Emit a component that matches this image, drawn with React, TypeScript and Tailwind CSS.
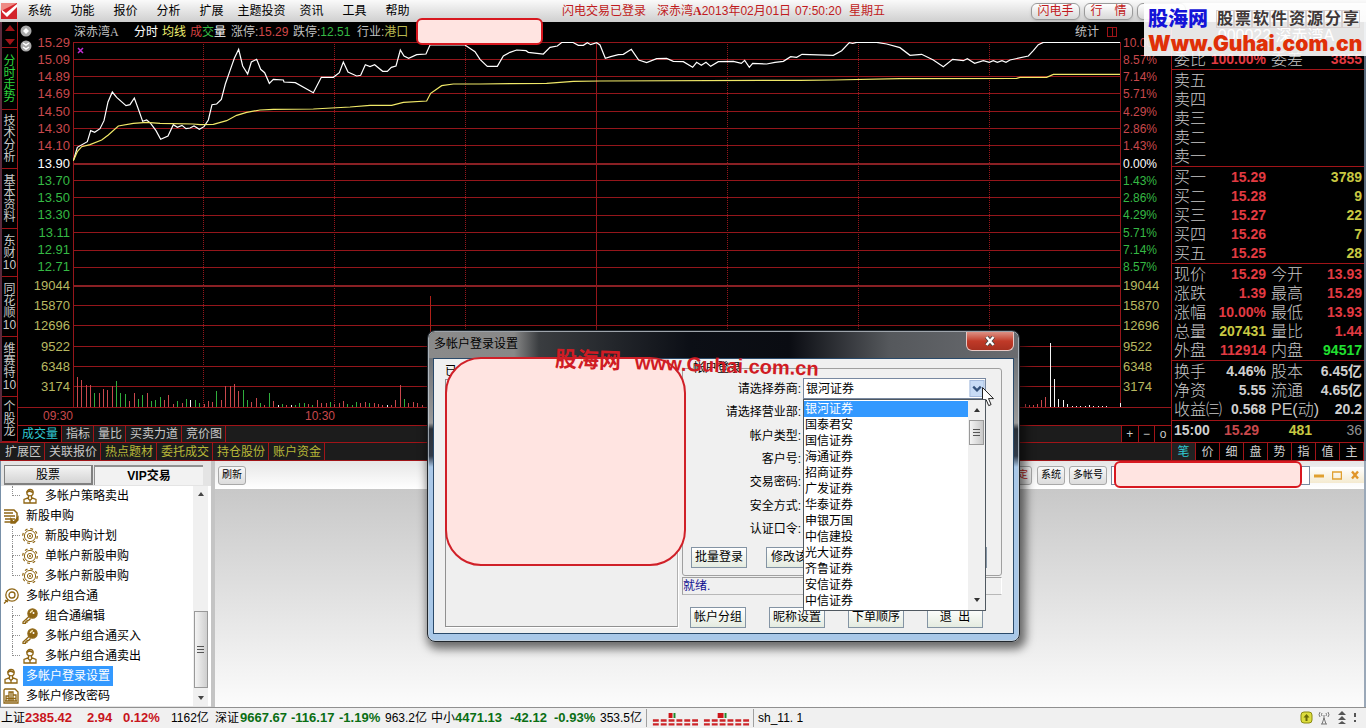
import type { ReactNode } from "react";

const MENU = ["系统", "功能", "报价", "分析", "扩展", "主题投资", "资讯", "工具", "帮助"];

const PRICES = ["15.29", "15.09", "14.89", "14.69", "14.50", "14.30", "14.10", "13.90", "13.70", "13.50", "13.30", "13.11", "12.91", "12.71"];
const PERCENTS = ["10.00%", "8.57%", "7.14%", "5.71%", "4.29%", "2.86%", "1.43%", "0.00%", "1.43%", "2.86%", "4.29%", "5.71%", "7.14%", "8.57%"];
const VOLUMES = ["19044", "15870", "12696", "9522", "6348", "3174"];

const GRID_Y = [42, 59, 76, 93, 111, 128, 145, 180, 197, 215, 232, 250, 267, 305, 325, 346, 366, 386, 407];

const PRICE_LINE =
  "220,482 232,442 262,425 272,392 284,397 300,386 312,362 324,306 337,276 350,292 378,317 390,314 403,294 416,330 428,364 440,360 452,370 468,392 482,418 504,408 520,374 532,382 546,376 558,386 570,384 582,378 598,388 612,380 625,360 636,314 650,312 664,298 676,252 690,212 703,175 716,148 728,198 743,222 754,186 770,178 782,208 794,218 808,250 820,238 850,240 852,246 886,248 940,278 964,232 1000,232 1018,218 1030,186 1044,216 1070,228 1082,226 1096,194 1110,200 1124,194 1148,214 1162,214 1174,202 1188,198 1201,150 1212,168 1226,175 1250,164 1278,162 1290,135 1395,135 1425,155 1440,178 1462,199 1492,199 1510,168 1530,157 1550,150 1578,152 1585,157 1630,162 1650,142 1672,138 1686,127 1718,127 1735,136 1750,136 1762,128 1772,134 1790,128 1800,135 1816,175 1832,170 1855,164 1870,163 1894,148 1916,180 1940,188 1970,176 2000,175 2020,184 2050,185 2078,202 2090,187 2104,196 2118,187 2132,199 2155,185 2200,184 2224,190 2234,181 2248,202 2258,190 2300,192 2325,187 2350,184 2372,170 2390,172 2406,163 2500,166 2525,152 2548,128 2558,130 2570,127 2630,127 2660,132 2700,143 2730,166 2765,163 2800,180 2830,200 2858,178 2890,182 2902,176 2924,190 2950,182 2968,187 2980,182 2992,187 3006,182 3018,187 3030,180 3085,168 3100,152 3115,134 3130,127 3360,127";
const AVERAGE_LINE =
  "220,482 232,455 245,440 270,434 305,420 325,405 355,378 400,370 440,367 480,370 580,372 600,374 640,373 680,362 710,346 740,337 780,330 820,328 940,327 1050,321 1110,316 1175,316 1210,307 1280,303 1292,280 1325,257 1360,252 1440,252 1640,250 1720,244 1800,243 2400,241 2500,240 2700,236 3050,235 3060,232 3140,232 3160,223 3360,223";

const RED = "#c8484c";
const GREEN = "#2fae3c";
const WHITE = "#f4f4f4";

// [x, height, colour]
const BARS: [number, number, string][] = [
  [77, 30, RED], [81, 27, RED], [86, 22, RED], [90, 22, RED], [94, 14, GREEN], [99, 14, RED], [103, 18, RED], [107, 17, RED],
  [112, 21, RED], [116, 26, GREEN], [120, 14, GREEN], [125, 13, GREEN], [129, 6, RED], [134, 14, RED], [138, 8, GREEN], [142, 12, GREEN],
  [147, 14, RED], [151, 6, GREEN], [155, 7, GREEN], [160, 10, GREEN], [164, 7, RED], [168, 12, RED], [173, 3, RED], [177, 6, GREEN],
  [182, 4, RED], [186, 8, GREEN], [190, 7, WHITE], [195, 7, GREEN], [199, 4, GREEN], [204, 3, RED], [208, 6, RED], [212, 5, RED],
  [216, 16, GREEN], [221, 7, RED], [225, 21, RED], [230, 21, RED], [234, 23, RED], [238, 16, RED], [243, 17, GREEN], [247, 7, GREEN],
  [251, 5, RED], [256, 9, RED], [260, 4, GREEN], [264, 2, RED], [269, 14, GREEN], [273, 6, RED], [278, 2, WHITE], [282, 3, GREEN],
  [286, 2, RED], [291, 2, WHITE], [295, 2, GREEN], [299, 4, GREEN], [304, 4, GREEN], [308, 3, RED], [312, 2, GREEN], [317, 7, RED],
  [321, 4, RED], [326, 4, RED], [330, 5, GREEN], [334, 3, RED], [339, 4, RED], [343, 6, RED], [347, 3, GREEN], [352, 2, GREEN],
  [356, 5, GREEN], [360, 4, RED], [365, 5, RED], [369, 4, GREEN], [374, 4, RED], [378, 3, RED], [382, 2, RED], [387, 2, WHITE],
  [391, 2, RED], [395, 7, RED], [400, 22, RED], [404, 8, GREEN], [408, 4, RED], [413, 5, RED], [417, 4, RED], [422, 2, RED],
  [430, 111, "#b02018"], [1025, 3, RED], [1029, 2, RED], [1033, 2, RED], [1037, 3, RED], [1041, 7, RED], [1045, 10, RED],
  [1050, 64, WHITE], [1054, 28, WHITE], [1058, 8, WHITE], [1063, 7, WHITE], [1067, 3, WHITE], [1072, 1, WHITE], [1076, 1, WHITE],
  [1080, 1, WHITE], [1085, 1, WHITE], [1089, 2, WHITE], [1093, 1, WHITE], [1098, 1, WHITE], [1102, 1, WHITE], [1106, 1, WHITE],
  [1120, 4, WHITE],
];

const SIDE_TABS = [
  { label: "分时走势", box: "h-[62px] text-[#2fd43c]" },
  { label: "技术分析", box: "h-[59px]" },
  { label: "基本资料", box: "h-[60px]" },
  { label: "东财10", box: "h-[48px]" },
  { label: "同花顺10", box: "h-[60px]" },
  { label: "维赛特10", box: "h-[60px]" },
  { label: "个股龙", box: "h-[45px]" },
];

const BROKERS = ["银河证券", "国泰君安", "国信证券", "海通证券", "招商证券", "广发证券", "华泰证券", "申银万国", "中信建投", "光大证券", "齐鲁证券", "安信证券", "中信证券"];

type IconName = "person" | "doc" | "gear" | "search" | "key" | "building";

const TREE: { label: string; icon: IconName; child?: boolean; last?: boolean; active?: boolean }[] = [
  { label: "多帐户策略卖出", icon: "person", child: true, last: true },
  { label: "新股申购", icon: "doc" },
  { label: "新股申购计划", icon: "gear", child: true },
  { label: "单帐户新股申购", icon: "gear", child: true },
  { label: "多帐户新股申购", icon: "gear", child: true, last: true },
  { label: "多帐户组合通", icon: "search" },
  { label: "组合通编辑", icon: "key", child: true },
  { label: "多帐户组合通买入", icon: "key", child: true },
  { label: "多帐户组合通卖出", icon: "person", child: true, last: true },
  { label: "多帐户登录设置", icon: "person", active: true },
  { label: "多帐户修改密码", icon: "building" },
];

function TreeIcon({ name }: { name: IconName }) {
  return (
    <svg viewBox="0 0 16 16" className="size-4 shrink-0" fill="none" stroke="#8f6614" strokeWidth="1.3">
      {name === "person" && (
        <>
          <circle cx="8" cy="4.6" r="3.2" />
          <path d="M6.5 7.5v2.2L2 11.5V15h12v-3.5L9.500 9.700V7.500M6 10.500l2 2 2-2M8 12.500V15" />
          <path d="M5 4.500q1.500-3 6 0" strokeWidth="1.800" />
        </>
      )}
      {name === "doc" && (
        <>
          <path d="M1 2h10l3 3v6M1 5h9M1 8h11M2 11h10M1.500 14h11" strokeWidth="1.500" />
          <path d="M8 11l2.500 3.500L15 9v3l-3 3H8z" fill="#8f6614" />
        </>
      )}
      {name === "gear" && (
        <>
          <circle cx="8" cy="8" r="7.300" strokeDasharray="2.870 2.870" strokeWidth="1.200" />
          <circle cx="8" cy="8" r="5.600" strokeWidth="1" />
          <circle cx="8" cy="8" r="2.600" strokeWidth="1" />
          <circle cx="8" cy="8" r="0.600" fill="#8f6614" strokeWidth="1" />
        </>
      )}
      {name === "search" && (
        <>
          <circle cx="9" cy="7" r="6.200" />
          <circle cx="9" cy="7" r="3" />
          <path d="M5 11.500L1 15.500M2 12l3 2" />
        </>
      )}
      {name === "key" && (
        <>
          <path d="M7 8.500L1 14v1.500h2.500V14H5v-1.500h1.500l2-2" />
          <circle cx="10.500" cy="5.500" r="4.600" fill="#8f6614" />
          <path d="M8.200 5q.600-2.200 2.800-2.500" stroke="#f6e7b0" />
          <circle cx="11.500" cy="5" r="1" fill="#fff" stroke="none" />
        </>
      )}
      {name === "building" && (
        <>
          <path d="M2 1h10l3 3v11H1V2z" />
          <path d="M3 13V8h3V4h4v9M3 10.500h10M10 7h3v6M2 13h12M6 8v5M8 4v9" />
        </>
      )}
    </svg>
  );
}

function MenuBar() {
  return (
    <header className="flex h-[22px] items-center bg-linear-to-b from-[#fafafa] to-[#cfcfcf] text-xs leading-4">
      <svg viewBox="0 0 16 16" className="mx-px size-4">
        <path d="M0 0h16v16H0z" fill="#d3252b" />
        <path d="M0 0h16L0 8z" fill="#ee8a84" />
        <path d="M1 7l4 3L16 1v3L6 14 1 9z" fill="#fff" />
      </svg>
      <nav className="flex">
        {MENU.map((m) => (
          <button key={m} type="button" className={m.length > 2 ? "w-[57px]" : "w-[43px]"}>
            {m}
          </button>
        ))}
      </nav>
      <div className="ml-[143px] flex whitespace-pre text-[#c01a20]">
        <span className="w-[95px]">闪电交易已登录</span>
        <span className="w-[138px]">深赤湾<b className="font-['Liberation_Serif']">A</b>2013年02月01日</span>
        <span className="w-[54px]">07:50:20</span>
        <span>星期五</span>
      </div>
      <div className="ml-auto flex w-[335px] gap-1">
        {["闪电手", "行　情", ""].map((b) => (
          <button
            key={b}
            type="button"
            aria-label={b || "更多"}
            className="h-[17px] w-[49px] rounded-md border border-[#9a9a9a] bg-linear-to-b from-white to-[#d8d8d8] leading-[15px] text-[#c01a20] shadow"
          >
            {b}
          </button>
        ))}
      </div>
    </header>
  );
}

function SideTabs() {
  return (
    <nav className="flex w-[18px] shrink-0 flex-col border-r border-l-2 border-r-[#a01418] border-l-[#5a2a3c] text-xs leading-3 text-[#c8c8c8]">
      <div className="flex h-[26px] items-center justify-center border-b border-[#a01418]">
        <svg viewBox="0 0 10 20" className="h-5 w-[10px]" fill="#a01418">
          <path d="M5 0l5 6H0zM5 20l5-6H0z" />
        </svg>
      </div>
      {SIDE_TABS.map((t) => (
        <button key={t.label} type="button" className={`flex flex-col items-center justify-center border-b border-[#a01418] ${t.box}`}>
          {(t.label.match(/\d+|\D/g) ?? []).map((ch) => (
            <span key={ch}>{ch}</span>
          ))}
        </button>
      ))}
    </nav>
  );
}

function axisColor(i: number, up: string) {
  if (i === 7) return "text-white";
  return i < 7 ? up : "text-[#35b944]";
}

function Axis({ values, align }: { values: string[]; align: string }) {
  return (
    <div className={`flex flex-1 flex-col pt-3 ${align}`}>
      <div className="grid h-[242px] auto-rows-fr items-center">
        {values.map((v, i) => (
          <div key={i} className={axisColor(i, "text-[#c8484c]")}>{v}</div>
        ))}
      </div>
      <div className="grid h-[121px] auto-rows-fr items-center text-[13px] text-[#b8b860]">
        {VOLUMES.map((v) => (
          <div key={v}>{v}</div>
        ))}
      </div>
    </div>
  );
}

function Plot() {
  return (
    <svg viewBox="73 42 1048 366" preserveAspectRatio="none" className="block h-[366px] w-full">
      <g stroke="#94161b" strokeWidth="1" shapeRendering="crispEdges">
        {GRID_Y.map((y) => (
          <path key={y} d={`M73 ${y}.5H1121`} />
        ))}
        <path d="M73 164H1121M73 286H1121" strokeWidth="2" stroke="#8a2024" />
        <path d="M73.500 42V408M596.500 42V408M1120.500 42V408" />
        <path d="M203.500 42V408M334.500 42V408M465.500 42V408M727.500 42V408M858.500 42V408M989.500 42V408" strokeDasharray="1 1" />
      </g>
      <g shapeRendering="crispEdges">
        {BARS.map(([x, h, color]) => (
          <rect key={x} x={x} y={407 - h} width="1" height={h} fill={color} />
        ))}
      </g>
      <g transform="scale(0.33333)" fill="none" strokeWidth="1.200">
        <polyline points={PRICE_LINE} stroke="#fff" vectorEffect="non-scaling-stroke" />
        <polyline points={AVERAGE_LINE} stroke="#f0e868" vectorEffect="non-scaling-stroke" />
      </g>
      <path d="M78 48l5 5M83 48l-5 5" stroke="#c030d0" strokeWidth="1.500" />
    </svg>
  );
}

function ChartArea() {
  return (
    <div className="flex h-[403px] text-xs leading-4">
      <div className="flex w-[55px] shrink-0 flex-col">
        <div className="flex h-[386px] border-b border-[#94161b]">
          <svg viewBox="0 0 12 32" className="mt-[2px] ml-[2px] h-8 w-3 shrink-0">
            <circle cx="6" cy="7" r="5.500" fill="#aaa" />
            <circle cx="6" cy="22" r="5.500" fill="#aaa" />
            <path d="M6 4l3 3-3 3-3-3z" fill="#fff" />
            <path d="M3 19l3 2 3-2M3 23l3 2 3-2" fill="none" stroke="#fff" strokeWidth="1.500" />
          </svg>
          <Axis values={PRICES} align="pr-[3px] text-right text-[13px]" />
        </div>
        <div className="text-right text-[#c8484c]">09:30</div>
      </div>
      <div className="min-w-0 flex-1">
        <div className="flex h-5 items-center whitespace-nowrap text-[#c0c0c0]">
          <span className="w-[61px] pl-px">深赤湾<span className="font-['Liberation_Serif']">A</span></span>
          <span className="w-7 text-white">分时</span>
          <span className="w-7 text-[#f0f070]">均线</span>
          <span className="w-[41px] text-white">
            <span className="text-[#d04040]">成</span>
            <span className="text-[#35b944]">交</span>量
          </span>
          <span className="w-[62px]">涨停:<span className="text-[#d04848]">15.29</span></span>
          <span className="w-16">跌停:<span className="text-[#35b944]">12.51</span></span>
          <span>行业:<span className="text-[#b8b850]">港口</span></span>
          <span className="ml-auto pr-2">统计</span>
          <span className="mr-1 flex h-[10px] w-[10px] border border-[#a01418]">
            <span className="ml-auto w-1 border-l border-[#a01418]" />
          </span>
        </div>
        <Plot />
        <div className="grid grid-cols-4 text-right text-[#c8484c]">
          <span>10:30</span>
        </div>
      </div>
      <div className="flex w-[50px] shrink-0 flex-col">
        <div className="flex h-[386px] border-b border-[#94161b]">
          <Axis values={PERCENTS} align="pl-[2px]" />
        </div>
      </div>
    </div>
  );
}

function TabButton({ children, color = "text-[#c8c8c8]" }: { children: ReactNode; color?: string }) {
  return (
    <button type="button" className={`h-full border-r border-[#a01418] pr-[3px] pl-1 text-xs ${color}`}>
      {children}
    </button>
  );
}

function PanelRow({ a, b, c, d, bc, dc }: { a: string; b?: string; c?: string; d?: string; bc?: string; dc?: string }) {
  return (
    <div className="flex h-[19px] items-center text-sm leading-[19px] font-bold whitespace-nowrap">
      <span className="w-[50px] text-base leading-[19px] font-light text-[#c8c8c8]">{a}</span>
      <span className={`flex w-[42px] justify-end ${bc ?? ""}`}>{b}</span>
      <span className="ml-[5px] text-base leading-[19px] font-light text-[#c8c8c8]">{c}</span>
      <span className={`ml-auto ${dc ?? ""}`}>{d}</span>
    </div>
  );
}

function QuotePanel() {
  const red = "text-[#e23a42]";
  const yellow = "text-[#c8c842]";
  const grey = "text-[#d0d0d0]";
  const group = "border-b border-[#a01418] pr-[2px] pl-[2px]";
  return (
    <aside className="flex w-[195px] shrink-0 flex-col border-r-2 border-l border-r-[#5a6a7c] border-l-[#a01418] bg-black">
      <div className={group}>
        <h1 className="pl-4 text-center text-base leading-[28px] text-white">000022 深赤湾A</h1>
        <PanelRow a="委比" b="100.00%" bc={red} c="委差" d="3855" dc={red} />
      </div>
      <div className={`pt-px ${group}`}>
        {["卖五", "卖四", "卖三", "卖二", "卖一"].map((s) => (
          <PanelRow key={s} a={s} />
        ))}
      </div>
      <div className={`pt-px ${group}`}>
        <PanelRow a="买一" b="15.29" bc={red} d="3789" dc={yellow} />
        <PanelRow a="买二" b="15.28" bc={red} d="9" dc={yellow} />
        <PanelRow a="买三" b="15.27" bc={red} d="22" dc={yellow} />
        <PanelRow a="买四" b="15.26" bc={red} d="7" dc={yellow} />
        <PanelRow a="买五" b="15.25" bc={red} d="28" dc={yellow} />
      </div>
      <div className={`pt-px ${group}`}>
        <PanelRow a="现价" b="15.29" bc={red} c="今开" d="13.93" dc={red} />
        <PanelRow a="涨跌" b="1.39" bc={red} c="最高" d="15.29" dc={red} />
        <PanelRow a="涨幅" b="10.00%" bc={red} c="最低" d="13.93" dc={red} />
        <PanelRow a="总量" b="207431" bc={yellow} c="量比" d="1.44" dc={red} />
        <PanelRow a="外盘" b="112914" bc={red} c="内盘" d="94517" dc="text-[#20e030]" />
      </div>
      <div className={`py-px ${group}`}>
        <PanelRow a="换手" b="4.46%" bc={grey} c="股本" d="6.45亿" dc={grey} />
        <PanelRow a="净资" b="5.55" bc={grey} c="流通" d="4.65亿" dc={grey} />
        <PanelRow a="收益㈢" b="0.568" bc={grey} c="PE(动)" d="20.2" dc={grey} />
      </div>
      <div className={`h-[22px] text-sm leading-[19px] font-bold ${group} ${grey}`}>
        <div className="flex">
          <span className="w-[50px]">15:00</span>
          <span className="w-[38px] text-[#c8484c]">15.29</span>
          <span className="w-[50px] text-right text-[#c8c842]">481</span>
          <span className="ml-auto font-normal text-[#909090]">36</span>
        </div>
      </div>
      <div className="grid flex-1 grid-cols-8 border-b border-[#a01418]">
        {["笔", "价", "细", "盘", "势", "指", "值", "主"].map((t, i) => (
          <button key={t} type="button" className={`border-r border-[#a01418] text-xs ${i === 0 ? "bg-[#222] text-[#30c8d0]" : grey}`}>
            {t}
          </button>
        ))}
      </div>
    </aside>
  );
}

function TreePanel() {
  return (
    <div className="flex w-[211px] shrink-0 flex-col border-l border-[#7890a8] bg-[#e4e4e4] text-xs">
      <div className="flex h-[25px] gap-px pt-1 pl-[3px]">
        <button type="button" className="h-5 w-[89px] border border-r-2 border-b-2 border-[#808080] bg-linear-to-b from-[#f4f4f4] to-[#d4d4d4]">
          股票
        </button>
        <button type="button" className="h-5 w-[109px] border-t-2 border-l border-[#909090] bg-[#f2f2f2] font-bold">
          VIP交易
        </button>
      </div>
      <div className="flex h-[220px] bg-white">
        <ul className="flex-1">
          {TREE.map((n) => (
            <li key={n.label} className="flex h-5 items-center pl-[2px]">
              {n.child && (
                <span className="mr-[2px] ml-[9px] flex h-5 w-2 flex-col">
                  <span className="h-[10px] border-b border-l border-dotted border-[#909090]" />
                  {!n.last && <span className="h-[10px] border-l border-dotted border-[#909090]" />}
                </span>
              )}
              <TreeIcon name={n.icon} />
              <span className={n.active ? "ml-1 bg-[#3399ff] px-[3px] leading-5 text-white" : "ml-1 px-[3px] leading-5"}>{n.label}</span>
            </li>
          ))}
        </ul>
        <div className="mr-[3px] flex w-[15px] flex-col items-center justify-between bg-[#f0f0f0] py-[6px]">
          <svg viewBox="0 0 6 4" className="h-1 w-[6px]"><path d="M3 0l3 4H0z" fill="#444" /></svg>
          <div className="mt-auto mb-2 flex h-[77px] w-[14px] flex-col items-center justify-center gap-[2px] border border-[#999] bg-linear-to-r from-[#f4f4f4] to-[#cfcfcf]">
            <span className="h-px w-[7px] bg-[#555]" />
            <span className="h-px w-[7px] bg-[#555]" />
            <span className="h-px w-[7px] bg-[#555]" />
          </div>
          <svg viewBox="0 0 6 4" className="h-1 w-[6px]"><path d="M0 0h6L3 4z" fill="#444" /></svg>
        </div>
      </div>
    </div>
  );
}

function ToolButton({ children, className = "" }: { children: ReactNode; className?: string }) {
  return (
    <button type="button" className={`h-[19px] rounded-[3px] border border-[#a8a8a8] bg-linear-to-b from-[#f8f8f8] to-[#dcdcdc] px-[3px] text-[10px] leading-4 ${className}`}>
      {children}
    </button>
  );
}

function TradeArea() {
  return (
    <div className="flex min-w-0 flex-1 flex-col border-r-2 border-l-4 border-r-[#9aa8b8] border-l-[#c4c4c4]">
      <div className="flex h-7 items-center gap-1 bg-linear-to-b from-[#e6e6e6] to-white pl-[3px]">
        <ToolButton>刷新</ToolButton>
        <ToolButton className="mr-px ml-auto text-[#c01a20]">锁定</ToolButton>
        <ToolButton>系统</ToolButton>
        <ToolButton>多帐号</ToolButton>
        <select aria-label="资金帐号" className="h-[19px] w-[199px] appearance-none border border-[#7a8aa0] bg-white" />
        <div className="-ml-1 flex w-[54px] items-center justify-around bg-linear-to-b from-white to-[#f4ead0] py-[3px]">
          <button type="button" aria-label="最小化"><svg viewBox="0 0 10 10" className="size-[10px]"><path d="M0 6h10" stroke="#e0a030" strokeWidth="3" /></svg></button>
          <button type="button" aria-label="最大化"><svg viewBox="0 0 10 10" className="size-[10px]"><path d="M0.500 2h9v7h-9z" fill="none" stroke="#e0a030" strokeWidth="1.500" /></svg></button>
          <button type="button" aria-label="关闭"><svg viewBox="0 0 10 10" className="size-[10px]"><path d="M2 1.500l6 7M8 1.500l-6 7" stroke="#e0952a" strokeWidth="2.400" /></svg></button>
        </div>
      </div>
      <div className="flex-1 bg-linear-to-b from-[#c8c8c8] to-[#fcfcfc]" />
    </div>
  );
}

function StatusBar() {
  const up = "text-[13px] font-bold text-[#c8141c]";
  const down = "text-[13px] font-bold text-[#0a6e14]";
  return (
    <footer className="flex h-[21px] items-center border-t border-[#909090] bg-[#f0f0f0] pl-px text-xs leading-4 whitespace-nowrap">
      <span className="w-6">上证</span>
      <span className={`w-[62px] ${up}`}>2385.42</span>
      <span className={`w-9 ${up}`}>2.94</span>
      <span className={`w-12 ${up}`}>0.12%</span>
      <span className="w-11">1162亿</span>
      <span className="w-[25px]">深证</span>
      <span className={`w-[51px] ${down}`}>9667.67</span>
      <span className={`w-12 ${down}`}>-116.17</span>
      <span className={`w-[46px] ${down}`}>-1.19%</span>
      <span className="w-[46px]">963.2亿</span>
      <span className="w-6">中小</span>
      <span className={`w-[55px] ${down}`}>4471.13</span>
      <span className={`w-11 ${down}`}>-42.12</span>
      <span className={`w-[46px] ${down}`}>-0.93%</span>
      <span className="w-[46px]">353.5亿</span>
      <svg viewBox="0 0 108 18" className="h-[18px] w-[108px] border-x border-[#a0a0a0]">
        <path d="M6 11.500h46M58 11.500h46M6 15.500h46M58 15.500h46" stroke="#cc2428" strokeWidth="2.500" strokeDasharray="6 2" />
        <path d="M22 4h4v5h-4zM72 4h6v5h-6z" fill="#cc1418" />
        <path d="M27 4h2v5h-2zM79 4h2v5h-2z" fill="#1a8a2a" />
      </svg>
      <span className="ml-1">sh_11. 1</span>
      <svg viewBox="0 0 60 16" className="mr-[6px] ml-auto h-4 w-[60px]">
        <rect x="1" y="2" width="11" height="11" rx="3" fill="#dcdc3c" stroke="#8a8a10" />
        <path d="M6.500 4l3 3.500h-2V11h-2V7.500h-2z" fill="#6a6a08" />
        <path d="M24 5v4M24 8l-2 6M24 8l2 6M21 14h6M20 2q-2 3 0 5M28 2q2 3 0 5M22 3q-1 1.500 0 3M26 3q1 1.500 0 3" fill="none" stroke="#777" />
        <path d="M42 1l4 4h-8zM42 6l4 4h-8zM42 11l4 3h-8z" fill="#555" />
        <path d="M55 3v4M55 10v2" stroke="#555" strokeWidth="2" />
      </svg>
    </footer>
  );
}

function FormButton({ children }: { children: ReactNode }) {
  return (
    <button type="button" className="h-[21px] w-14 border border-[#8494a4] bg-linear-to-b from-white to-[#e4ebe0] leading-[19px] whitespace-pre">
      {children}
    </button>
  );
}

function BrokerSelect() {
  return (
    <div className="relative h-[21px] w-[183px]">
      <select id="broker" className="h-[21px] w-full appearance-none border border-[#7888a0] bg-white px-[2px] text-xs">
        <option>银河证券</option>
      </select>
      <svg viewBox="0 0 16 18" className="pointer-events-none absolute top-[2px] right-px h-[17px] w-4">
        <rect x="0.500" y="0.500" width="15" height="17" fill="#c8dcf6" stroke="#a0b8dc" />
        <path d="M4 7l4 4 4-4" fill="none" stroke="#34527c" strokeWidth="2.400" />
      </svg>
      <div className="absolute top-[21px] left-0 z-10 flex w-[183px] border border-[#505860] bg-white">
        <ul role="listbox" aria-label="券商" className="flex-1 py-px">
          {BROKERS.map((b, i) => (
            <li key={b} role="option" aria-selected={i === 0} className={i === 0 ? "bg-[#3399ff] pl-px leading-4 text-white" : "pl-px leading-4"}>
              {b}
            </li>
          ))}
        </ul>
        <div className="flex w-[17px] flex-col items-center bg-[#f0f0f0] py-2">
          <svg viewBox="0 0 6 4" className="h-1 w-[6px]"><path d="M3 0l3 4H0z" fill="#333" /></svg>
          <div className="mt-2 flex h-[25px] w-[15px] flex-col items-center justify-center gap-[2px] border border-[#999] bg-linear-to-r from-[#f4f4f4] to-[#c8c8c8]">
            <span className="h-px w-[7px] bg-[#555]" />
            <span className="h-px w-[7px] bg-[#555]" />
            <span className="h-px w-[7px] bg-[#555]" />
          </div>
          <svg viewBox="0 0 6 4" className="mt-auto h-1 w-[6px]"><path d="M0 0h6L3 4z" fill="#333" /></svg>
        </div>
      </div>
    </div>
  );
}

function LoginDialog() {
  const fields = ["请选择营业部", "帐户类型", "客户号", "交易密码", "安全方式", "认证口令"];
  return (
    <section
      role="dialog"
      aria-label="多帐户登录设置"
      className="absolute top-[330px] left-[427px] w-[593px] rounded-lg border border-[#20262c] bg-[linear-gradient(to_bottom,#3c3e40_0,#70757a_28px,#9a9a9a_92px,#2a3038_98px,#303a48_125px,#a9c8e8_136px,#a9c8e8_100%)] px-[5px] pb-[7px] text-xs leading-4 shadow-[3px_4px_10px_3px_rgba(0,0,0,0.55)] ring-1 ring-[#c8d0d8]/70 ring-inset"
    >
      <div className="-mx-1 mt-px flex h-[26px] items-start justify-between rounded-t-md bg-[linear-gradient(to_right,#8a8a8a_0,#888_85px,#3a3d40_110px,#0c0f16_260px,#0a0c12_360px,#55585c_460px,#6a6c70_100%)]">
        <h2 className="pt-1 pl-[5px]">多帐户登录设置</h2>
        <button type="button" aria-label="关闭" className="mr-1 flex h-[19px] w-[48px] items-center justify-center rounded-b-md border border-t-0 border-[#e8c8c4] bg-linear-to-b from-[#dc9084] via-[#c03a28] to-[#a83020]">
          <svg viewBox="0 0 10 10" className="size-[10px]">
            <path d="M1.500 1l7 8M8.500 1l-7 8" stroke="#444" strokeWidth="4" />
            <path d="M1.500 1l7 8M8.500 1l-7 8" stroke="#fff" strokeWidth="2.400" />
          </svg>
        </button>
      </div>
      <div className="flex h-[276px] border border-[#2a4a6a] bg-[#f0f0f0] pl-[11px]">
        <div className="flex w-[233px] flex-col pt-1">
          <span>已</span>
          <div className="mb-[6px] flex-1 border border-[#909090] border-r-[#b0b0b0] bg-[#efefef] shadow-[1px_1px_0_#fff]" />
        </div>
        <div className="ml-1 w-[320px]">
          <fieldset className="h-[217px] rounded-[3px] border border-[#a0a0a0]">
            <legend className="ml-[10px] leading-[18px]">帐户登录</legend>
            <div className="grid h-[164px] auto-rows-fr grid-cols-[118px_183px] items-center gap-x-[2px]">
              <label htmlFor="broker" className="text-right">请选择券商:</label>
              <BrokerSelect />
              {fields.map((f) => (
                <div key={f} className="col-span-2 grid grid-cols-[118px_183px] items-center gap-x-[2px]">
                  <label htmlFor={f} className="text-right">{f}:</label>
                  <input id={f} className="h-[19px] w-[182px] border border-[#8494a4] bg-white" />
                </div>
              ))}
            </div>
            <div className="mt-[6px] flex pr-[14px] pl-2">
              <FormButton>批量登录</FormButton>
              <div className="ml-[19px] h-[21px] w-[76px] overflow-hidden border border-[#8494a4] bg-linear-to-b from-white to-[#e4ebe0]">
                <button type="button" className="pl-1 leading-[19px] whitespace-nowrap">修改该</button>
              </div>
              <div className="ml-auto h-[21px] w-14 border border-[#8494a4]" />
            </div>
          </fieldset>
          <div className="mt-px h-[18px] border border-[#a0a0a0] border-r-white border-b-[#b8b8b8] text-[#101090]">就绪.</div>
          <div className="mt-3 flex gap-[23px] pl-2">
            <FormButton>帐户分组</FormButton>
            <FormButton>昵称设置</FormButton>
            <FormButton>下单顺序</FormButton>
            <FormButton>退  出</FormButton>
          </div>
        </div>
      </div>
    </section>
  );
}

function Banner() {
  return (
    <div className="absolute top-[3px] right-0 w-[222px] bg-white/90 pt-1 pl-1">
      <div className="flex items-center">
        <span className="text-xl leading-6 font-black text-[#1414d8]">股海网</span>
        <span className="ml-2 flex text-[16px] leading-[18px] font-bold text-[#403838]">
          {Array.from("股票软件资源分享").map((ch) => (
            <span key={ch} className="w-[18px] border border-[#d8d0d0] text-center leading-4">
              {ch}
            </span>
          ))}
        </span>
      </div>
      <div className="font-['Inter'] text-[21px] leading-[25px] font-black whitespace-nowrap text-[#e03008]">Www.Guhai.com.cn</div>
    </div>
  );
}

export default function App() {
  return (
    <div className="relative flex min-h-screen flex-col overflow-hidden bg-white font-['Liberation_Sans','Noto_Sans_CJK_SC',sans-serif] text-black">
      <MenuBar />
      <main className="flex h-[439px] bg-black">
        <div className="flex min-w-0 flex-1 flex-col">
          <div className="flex h-[420px]">
            <SideTabs />
            <div className="flex min-w-0 flex-1 flex-col">
              <ChartArea />
              <div className="flex h-[17px] border-t border-[#a01418] bg-[#1c1c1c] leading-4">
                <TabButton color="bg-black text-[#30c8d0]">成交量</TabButton>
                <TabButton>指标</TabButton>
                <TabButton>量比</TabButton>
                <TabButton>买卖力道</TabButton>
                <TabButton>竞价图</TabButton>
                <div className="ml-auto flex w-[50px] border-l border-[#a01418] bg-black text-xs text-[#c8c8c8]">
                  <button type="button" className="flex-1 border-r border-[#a01418]">+</button>
                  <button type="button" className="flex-1 border-r border-[#a01418]">−</button>
                  <button type="button" className="flex-1">o</button>
                </div>
              </div>
            </div>
          </div>
          <div className="flex h-[19px] border-y border-[#a01418] bg-[#1c1c1c] pl-px leading-4">
            <TabButton>扩展区</TabButton>
            <TabButton>关联报价</TabButton>
            <TabButton color="text-[#b8b838]">热点题材</TabButton>
            <TabButton color="text-[#b8b838]">委托成交</TabButton>
            <TabButton color="text-[#b8b838]">持仓股份</TabButton>
            <TabButton color="text-[#b8b838]">账户资金</TabButton>
          </div>
        </div>
        <QuotePanel />
      </main>
      <div className="flex flex-1">
        <TreePanel />
        <TradeArea />
      </div>
      <StatusBar />

      <div className="absolute top-[18px] left-[416px] h-[27px] w-[127px] rounded-md border-2 border-[#d81820] bg-[#ffe4e1]" />
      <div className="absolute top-[461px] right-[64px] h-[27px] w-[188px] rounded-md border-2 border-[#d81820] bg-[#ffe4e1]" />
      <Banner />
      <LoginDialog />
      <div className="absolute top-[357px] left-[445px] h-[209px] w-[241px] rounded-[36px] border-2 border-[#d02028] bg-[#ffe4e1]" />
      <div className="absolute top-[350px] left-[555px] flex rotate-2 items-center gap-[14px] leading-6 font-bold whitespace-nowrap text-[#d01c24]">
        <span className="text-[22px]">股海网</span>
        <span className="text-xl">www.Guhai.com.cn</span>
      </div>
      <svg viewBox="0 0 12 20" className="absolute top-[387px] left-[982px] h-5 w-3">
        <path d="M0.500 0.500v15.500l3.600-3.400 2.600 6 2.400-1-2.600-6h5z" fill="#fff" stroke="#222" />
      </svg>
    </div>
  );
}
